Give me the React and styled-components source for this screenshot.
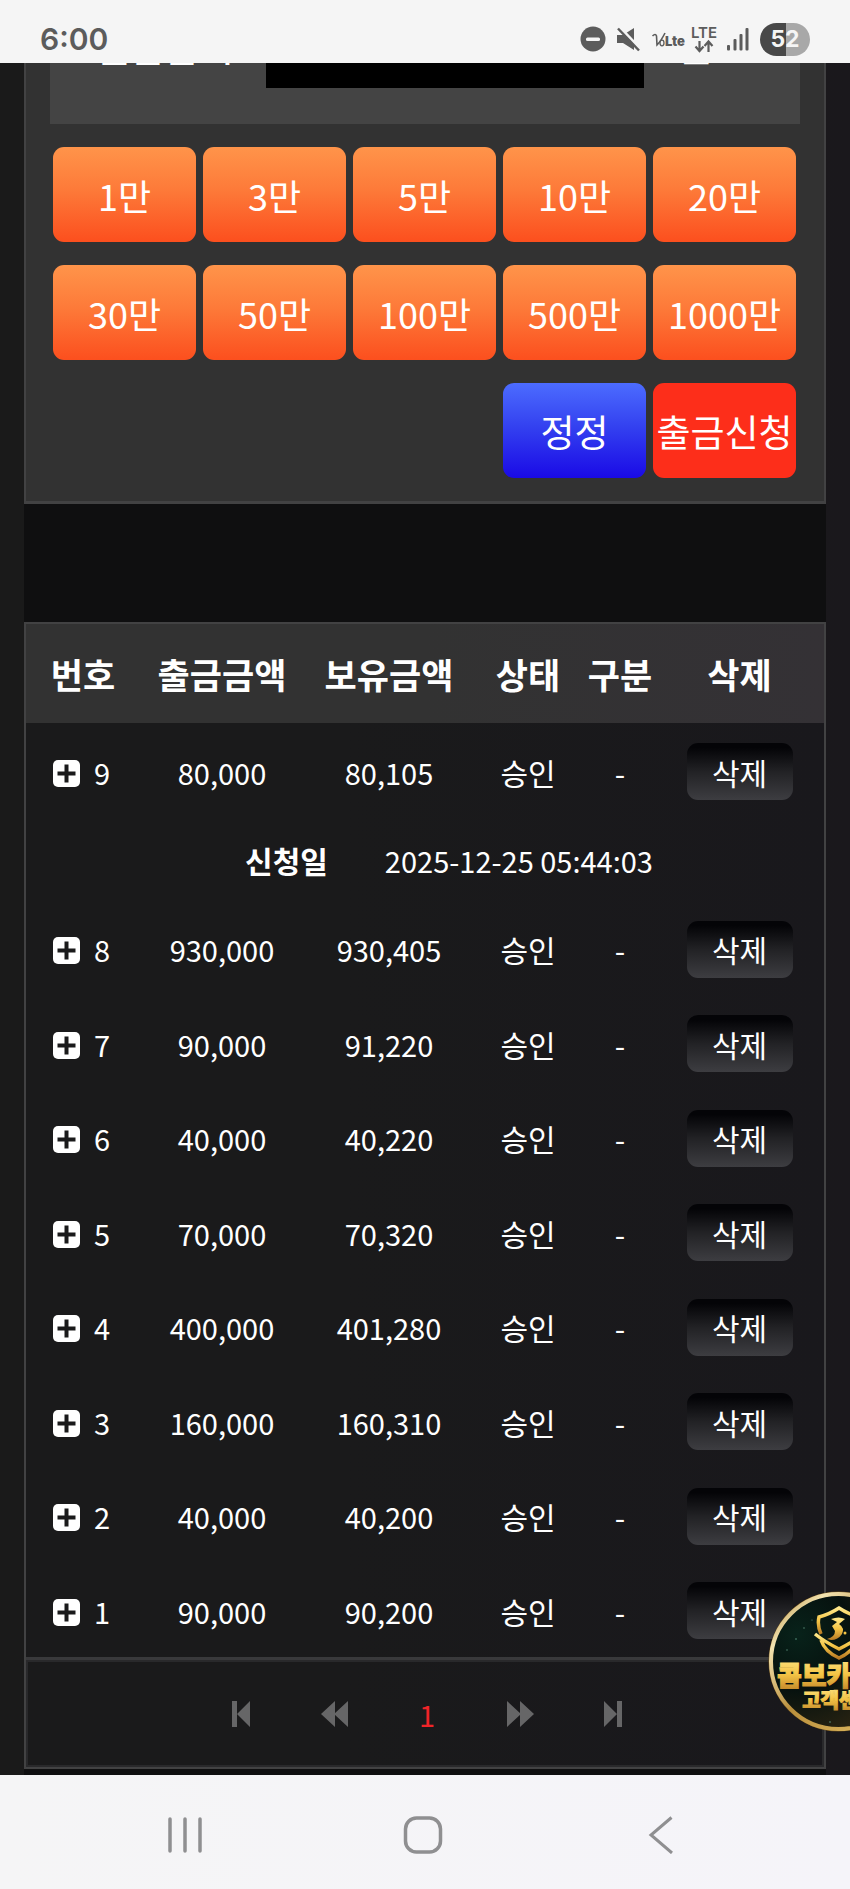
import React, { useState } from "react";
import styled, { createGlobalStyle } from "styled-components";

const GlobalStyle = createGlobalStyle`
  * {
    box-sizing: border-box;
  }
  body {
    margin: 0;
    background: #1a1a1a;
    color: #fff;
    font-family: "Noto Sans CJK KR", "Noto Sans", sans-serif;
  }
  button, input {
    font-family: inherit;
    color: inherit;
    border: 0;
    padding: 0;
  }
  button {
    cursor: pointer;
  }
`;

const Screen = styled.div`
  position: relative;
  overflow: hidden;
  background: linear-gradient(90deg, #1a1a1a 40%, #1a181c);
`;

const StatusBar = styled.header`
  position: relative;
  z-index: 1;
  display: flex;
  align-items: flex-end;
  justify-content: space-between;
  height: 63px;
  padding: 0 40px 7px;
  background: #f5f5f5;
  color: #5c5c5c;
`;

const Clock = styled.time`
  font-family: Inter, sans-serif;
  font-size: 30px;
  line-height: 34px;
  font-weight: 600;
`;

const StatusIcons = styled.div`
  display: flex;
  align-items: center;
  height: 34px;
`;

const Content = styled.main`
  margin: 0 24px;
  padding-bottom: 6px;
  overflow: hidden;
  background: #0f0f10;
`;

/* page is scrolled down, the upper part of the form sits under the status bar */
const FormPanel = styled.form`
  margin-top: -115px;
  padding: 24px 24px 23px;
  border: 2px solid #424243;
  border-bottom-width: 3px;
  background: #323232;
`;

const AmountRow = styled.div`
  display: flex;
  align-items: center;
  height: 150px;
  background: #444;
  font-size: 37px;
  line-height: 44px;
  font-weight: 500;
`;

const AmountLabel = styled.label`
  width: 216px;
  padding: 0 0 6px 14px;
  text-align: center;
`;

const AmountInput = styled.input`
  flex: 1;
  min-width: 0;
  height: 78px;
  background: #000;
  font-size: 36px;
  text-align: right;
`;

const Unit = styled.span`
  width: 156px;
  padding: 0 54px 6px 0;
  text-align: center;
`;

const ButtonGrid = styled.div`
  display: grid;
  grid-template-columns: repeat(5, 1fr);
  gap: 23px 7px;
  padding: 23px 4px 0 3px;
`;

const fills = {
  amount: "linear-gradient(#ff944a, #fd7a39 45%, #fc4f1e)",
  reset: "linear-gradient(#4c6cff, #3442f0 45%, #1a0ae6)",
  submit: "#fd2e1a",
};

const GridButton = styled.button`
  grid-column: ${(p) => p.$column || "auto"};
  height: 95px;
  border-radius: 11px;
  background: ${(p) => fills[p.$kind || "amount"]};
  font-size: ${(p) => (p.$kind ? 37 : 36)}px;
  line-height: 48px;
  white-space: nowrap;
`;

const ListPanel = styled.section`
  margin-top: 118px;
  border: 2px solid #424243;
  background: linear-gradient(90deg, #1a1a1b 40%, #19181c);
`;

const Table = styled.table`
  width: 100%;
  table-layout: fixed;
  border-collapse: collapse;
  text-align: center;
  font-size: 30px;
  line-height: 40px;

  th, td {
    padding: 0;
    white-space: nowrap;
  }
  td {
    padding-top: 2px;
  }
  th:last-child, td:nth-child(6) {
    padding-right: 3px;
  }
`;

const HeadRow = styled.tr`
  height: 99px;
  background: linear-gradient(90deg, #323232 50%, #343135);
  font-size: 35px;
  line-height: 48px;
`;

const Row = styled.tr`
  height: ${(p) => (p.$tall ? 95 : 94)}px;
`;

const DetailRow = styled.tr`
  height: 83px;
`;

const Detail = styled.div`
  display: flex;
  justify-content: center;
  gap: 57px;
  padding: 0 0 2px 48px;
`;

const Figure = styled.span`
  font-size: 29px;
`;

const NumberCell = styled.div`
  display: flex;
  align-items: center;
  gap: 14px;
  padding-left: 27px;
`;

const ExpandButton = styled.button`
  display: flex;
  padding-top: 3px;
  background: none;
`;

const DeleteButton = styled.button`
  display: block;
  width: 106px;
  height: 57px;
  margin: 0 auto;
  border-radius: 11px;
  background: linear-gradient(#040407 8%, #222225 50%, #3d3d41);
  font-size: 30px;
  line-height: 40px;
`;

const Pager = styled.nav`
  display: flex;
  align-items: center;
  justify-content: center;
  height: 110px;
  padding-left: 4px;
  border-top: 3px solid #39393b;
  box-shadow: inset 0 0 0 2px #29292b;
`;

const PagerButton = styled.button`
  display: flex;
  align-items: center;
  justify-content: center;
  width: 93px;
  height: 60px;
  background: none;
  color: ${(p) => (p.$current ? "#f02428" : "#666667")};
  font-size: 29px;
  line-height: 40px;
`;

const SupportLink = styled.a`
  position: absolute;
  right: -59px;
  bottom: 157px;
  display: block;
  width: 141px;
  height: 141px;
`;

const NavBar = styled.footer`
  display: grid;
  grid-template-columns: repeat(3, 1fr);
  justify-items: center;
  height: 114px;
  padding: 0 70px 0 66px;
  background: linear-gradient(90deg, #f5f5f6, #f5f4f9);
`;

const NavButton = styled.button`
  display: flex;
  align-items: center;
  justify-content: center;
  width: 80px;
  height: 114px;
  padding-top: 5px;
  background: none;
  color: #8f8f91;
`;

const amounts = ["1만", "3만", "5만", "10만", "20만", "30만", "50만", "100만", "500만", "1000만"];

const columns = [
  { name: "번호", width: 114 },
  { name: "출금금액", width: 164 },
  { name: "보유금액", width: 170 },
  { name: "상태", width: 108 },
  { name: "구분", width: 76 },
  { name: "삭제", width: 166 },
];

const withdrawals = [
  { no: 9, amount: "80,000", balance: "80,105", date: "2025-12-25 05:44:03" },
  { no: 8, amount: "930,000", balance: "930,405" },
  { no: 7, amount: "90,000", balance: "91,220" },
  { no: 6, amount: "40,000", balance: "40,220" },
  { no: 5, amount: "70,000", balance: "70,320" },
  { no: 4, amount: "400,000", balance: "401,280" },
  { no: 3, amount: "160,000", balance: "160,310" },
  { no: 2, amount: "40,000", balance: "40,200" },
  { no: 1, amount: "90,000", balance: "90,200" },
];

const StatusGlyphs = () => (
  <svg width="230" height="34" viewBox="580 22 230 34" aria-hidden="true">
    <circle cx="593" cy="39" r="12.5" fill="#5c5c5c" />
    <rect x="586" y="37.5" width="14" height="3.4" rx="1.5" fill="#f5f5f5" />
    {/* muted speaker */}
    <path d="M617 35h6l11-7v22l-11-7h-6z" fill="#5c5c5c" />
    <path d="M619 26.500l21 22" stroke="#f5f5f5" strokeWidth="3" />
    <path d="M618 28.500l21 22" stroke="#5c5c5c" strokeWidth="2.5" />
    {/* VoLTE */}
    <path d="M652.500 36q3-3 4 0l.5 9q4-4 8-12" fill="none" stroke="#5c5c5c" strokeWidth="1.6" />
    <ellipse cx="662" cy="43" rx="2" ry="2.8" fill="none" stroke="#5c5c5c" strokeWidth="1.3" />
    <text x="665" y="46" fontFamily="Inter, sans-serif" fontSize="13" fontWeight="900" fill="#5c5c5c">Lte</text>
    <text x="691" y="38" fontFamily="Inter, sans-serif" fontSize="15" fontWeight="600" fill="#5c5c5c">LTE</text>
    <g fill="none" stroke="#5c5c5c" strokeWidth="2.2">
      <path d="M699.500 41v9.500M695.500 46.500l4 4.500 4-4.500" />
      <path d="M708.500 52v-9.500M704.500 46l4-4.500 4 4.500" />
    </g>
    <g fill="#5c5c5c">
      <rect x="727" y="45" width="3" height="5.5" rx="1" />
      <rect x="733.5" y="39" width="3" height="11.5" rx="1" />
      <rect x="739.5" y="34" width="3" height="16.5" rx="1" />
      <rect x="745.5" y="28" width="3" height="22.5" rx="1" />
    </g>
    <path d="M786 23h7.500a16.500 16.500 0 0 1 0 33H786z" fill="#a8a8a8" />
    <path d="M786 23h-9.500a16.500 16.500 0 0 0 0 33H786z" fill="#484848" />
    <text x="785" y="47" textAnchor="middle" fontFamily="Inter, sans-serif" fontSize="23" fontWeight="700" fill="#f5f5f5">52</text>
  </svg>
);

const PlusIcon = () => (
  <svg width="27" height="27" viewBox="0 0 27 27" aria-hidden="true">
    <rect width="27" height="27" rx="5" fill="#fff" />
    <path d="M13.500 4.500v18M4.500 13.500h18" stroke="#1a1a1b" strokeWidth="4" />
  </svg>
);

const FirstIcon = () => (
  <svg width="18" height="26" viewBox="0 0 18 26" fill="currentColor" aria-hidden="true">
    <path d="M0 0h5v26H0zM18 0v26L5 13z" />
  </svg>
);

const PrevIcon = () => (
  <svg width="27" height="26" viewBox="0 0 27 26" fill="currentColor" aria-hidden="true">
    <path d="M14 0v26L0 13zM27 0v26L13 13z" />
  </svg>
);

const NextIcon = () => (
  <svg width="27" height="26" viewBox="0 0 27 26" fill="currentColor" aria-hidden="true">
    <path d="M0 0v26l14-13zM13 0v26l14-13z" />
  </svg>
);

const LastIcon = () => (
  <svg width="18" height="26" viewBox="0 0 18 26" fill="currentColor" aria-hidden="true">
    <path d="M0 0v26l13-13zM13 0h5v26h-5z" />
  </svg>
);

const SupportBadge = () => (
  <svg width="141" height="141" viewBox="0 0 141 141" aria-hidden="true">
    <defs>
      <linearGradient id="gold" x1="0" y1="0" x2="0" y2="1">
        <stop offset="0" stopColor="#ffe98a" />
        <stop offset="0.5" stopColor="#f4c445" />
        <stop offset="1" stopColor="#b87a24" />
      </linearGradient>
      <linearGradient id="ring" x1="0" y1="0" x2="1" y2="1">
        <stop offset="0" stopColor="#a8802f" />
        <stop offset="0.2" stopColor="#f3e3b0" />
        <stop offset="0.5" stopColor="#b98f3c" />
        <stop offset="1" stopColor="#e8c46a" />
      </linearGradient>
      <radialGradient id="night" cx="0.2" cy="0.3" r="0.8">
        <stop offset="0" stopColor="#08221a" />
        <stop offset="0.5" stopColor="#06110e" />
        <stop offset="1" stopColor="#2a2412" />
      </radialGradient>
    </defs>
    <circle cx="70.5" cy="70.5" r="70" fill="#6b4d1a" />
    <circle cx="70.5" cy="70.5" r="67.5" fill="url(#night)" stroke="url(#ring)" strokeWidth="4" />
    <g fill="#5f9680">
      <circle cx="28" cy="48" r="0.8" />
      <circle cx="36" cy="37" r="0.7" />
      <circle cx="19" cy="59" r="0.7" />
      <circle cx="44" cy="29" r="0.6" />
      <circle cx="62" cy="131" r="0.8" />
    </g>
    <g fill="none" stroke="url(#gold)" strokeWidth="3.5">
      <path d="M53 43q-4-9-2-17 11-3 20-9 9 6 20 9 2 8-2 17" />
      <path d="M47 43q10 8 24 15 14-7 24-15M53 49q4 12 18 18 14-6 18-18" />
    </g>
    <path d="M63 28q8-3 14 0l-6 5q6 4 3 10-4 6-11 6l-4-1q8-2 8-8l-3-5 5-4z" fill="url(#gold)" />
    <circle cx="77" cy="42" r="1.5" fill="#f4c445" />
    <g
      fontFamily="'Noto Sans CJK KR', sans-serif"
      fontWeight="900"
      textAnchor="middle"
      fill="url(#gold)"
      stroke="url(#gold)"
      strokeWidth="1"
    >
      <text x="71" y="95" fontSize="27">콤보카지노</text>
      <text x="71" y="117" fontSize="20">고객센터</text>
    </g>
  </svg>
);

const Withdrawal = ({ item, tall }) => {
  const [open, setOpen] = useState(item.no === 9);

  return (
    <>
      <Row $tall={tall}>
        <td>
          <NumberCell>
            <ExpandButton type="button" aria-label="상세" aria-expanded={open} onClick={() => setOpen(!open)}>
              <PlusIcon />
            </ExpandButton>
            <Figure>{item.no}</Figure>
          </NumberCell>
        </td>
        <td><Figure>{item.amount}</Figure></td>
        <td><Figure>{item.balance}</Figure></td>
        <td>승인</td>
        <td>-</td>
        <td>
          <DeleteButton type="button">삭제</DeleteButton>
        </td>
      </Row>
      {open && item.date && (
        <DetailRow>
          <td colSpan={6}>
            <Detail>
              <strong>신청일</strong>
              <Figure>{item.date}</Figure>
            </Detail>
          </td>
        </DetailRow>
      )}
    </>
  );
};

const App = () => {
  const [amount, setAmount] = useState("");

  return (
    <Screen>
      <GlobalStyle />
      <StatusBar>
        <Clock>6:00</Clock>
        <StatusIcons>
          <StatusGlyphs />
        </StatusIcons>
      </StatusBar>

      <Content>
        <FormPanel onSubmit={(e) => e.preventDefault()}>
          <AmountRow>
            <AmountLabel htmlFor="amount">출금금액</AmountLabel>
            <AmountInput id="amount" value={amount} onChange={(e) => setAmount(e.target.value)} />
            <Unit>원</Unit>
          </AmountRow>
          <ButtonGrid>
            {amounts.map((label) => (
              <GridButton type="button" key={label} onClick={() => setAmount(parseInt(label) * 10000)}>
                {label}
              </GridButton>
            ))}
            <GridButton type="button" $kind="reset" $column={4} onClick={() => setAmount("")}>
              정정
            </GridButton>
            <GridButton type="submit" $kind="submit">출금신청</GridButton>
          </ButtonGrid>
        </FormPanel>

        <ListPanel>
          <Table>
            <colgroup>
              {columns.map((col) => (
                <col key={col.name} width={col.width} />
              ))}
            </colgroup>
            <thead>
              <HeadRow>
                {columns.map((col) => (
                  <th key={col.name} scope="col">{col.name}</th>
                ))}
              </HeadRow>
            </thead>
            <tbody>
              {withdrawals.map((item, i) => (
                <Withdrawal key={item.no} item={item} tall={i % 2 === 0} />
              ))}
            </tbody>
          </Table>
          <Pager>
            <PagerButton type="button" aria-label="처음"><FirstIcon /></PagerButton>
            <PagerButton type="button" aria-label="이전"><PrevIcon /></PagerButton>
            <PagerButton type="button" $current>1</PagerButton>
            <PagerButton type="button" aria-label="다음"><NextIcon /></PagerButton>
            <PagerButton type="button" aria-label="마지막"><LastIcon /></PagerButton>
          </Pager>
        </ListPanel>
      </Content>

      <NavBar>
        <NavButton type="button" aria-label="최근 앱">
          <svg width="36" height="38" viewBox="0 0 36 38" stroke="currentColor" strokeWidth="3.5" strokeLinecap="round">
            <path d="M3 3v32M18 3v32M33 3v32" />
          </svg>
        </NavButton>
        <NavButton type="button" aria-label="홈">
          <svg width="40" height="38" viewBox="0 0 40 38" fill="none" stroke="currentColor" strokeWidth="3.5">
            <rect x="2.5" y="2" width="35" height="34" rx="11" />
          </svg>
        </NavButton>
        <NavButton type="button" aria-label="뒤로">
          <svg width="26" height="38" viewBox="0 0 26 38" fill="none" stroke="currentColor" strokeWidth="3">
            <path d="M23.500 1.500L3 19l21 18" />
          </svg>
        </NavButton>
      </NavBar>

      <SupportLink href="#support" aria-label="고객센터">
        <SupportBadge />
      </SupportLink>
    </Screen>
  );
};

export default App;
